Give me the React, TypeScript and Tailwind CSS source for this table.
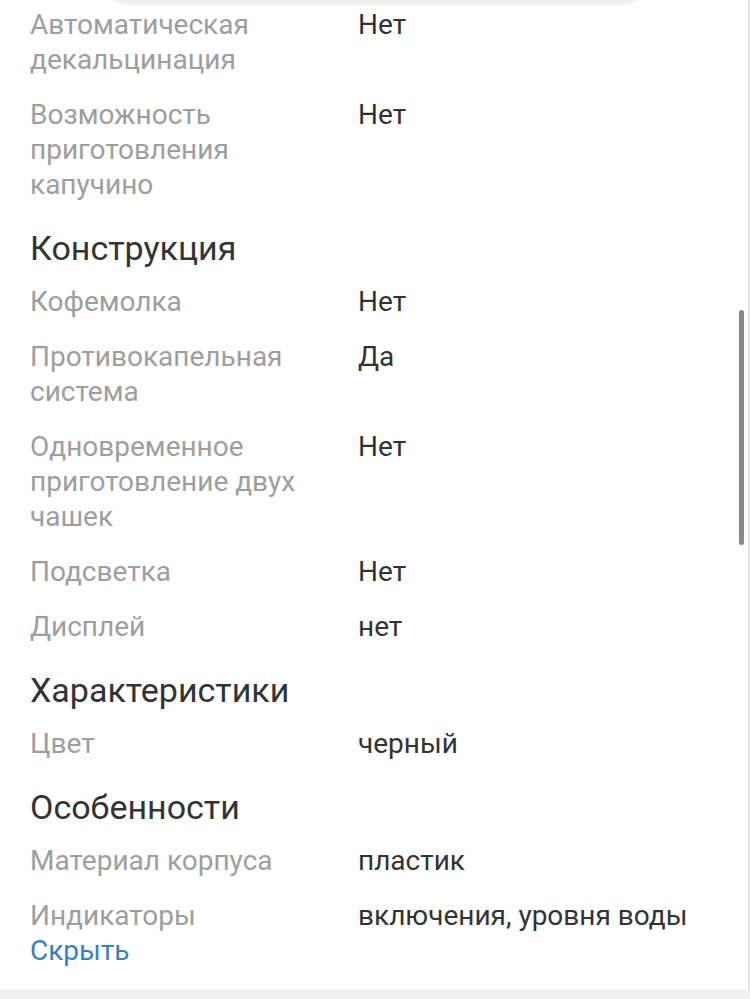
import React from "react";

type Row = { label: string; value: string };
type Section = { title?: string; rows: Row[] };

const sections: Section[] = [
  {
    rows: [
      { label: "Автоматическая декальцинация", value: "Нет" },
      { label: "Возможность приготовления капучино", value: "Нет" },
    ],
  },
  {
    title: "Конструкция",
    rows: [
      { label: "Кофемолка", value: "Нет" },
      { label: "Противокапельная система", value: "Да" },
      { label: "Одновременное приготовление двух чашек", value: "Нет" },
      { label: "Подсветка", value: "Нет" },
      { label: "Дисплей", value: "нет" },
    ],
  },
  {
    title: "Характеристики",
    rows: [{ label: "Цвет", value: "черный" }],
  },
  {
    title: "Особенности",
    rows: [
      { label: "Материал корпуса", value: "пластик" },
      { label: "Индикаторы", value: "включения, уровня воды" },
    ],
  },
];

export default function App() {
  return (
    <div
      className="relative w-[750px] h-[999px] overflow-hidden bg-[#f0f0f0]"
      style={{ fontFamily: "Roboto, 'Noto Sans', sans-serif" }}
    >
      <div className="w-[749px] h-[990px] bg-white border-r border-[#dcdcdc] overflow-hidden">
        <div className="ml-[107px] mr-[104px] h-[40px] mt-[-35px] rounded-[20px] bg-[#f0f0f0]" />
        <div className="pl-[30px] pt-[2px]">
          {sections.map((s, si) => (
            <div key={si}>
              {s.title && (
                <div className="mt-[26px] mb-[16px] text-[34px] leading-[40px] text-[#333333]">
                  {s.title}
                </div>
              )}
              <div className="flex flex-col gap-[20px]">
                {s.rows.map((r, ri) => (
                  <div key={ri} className="grid grid-cols-[328px_1fr] text-[28px] leading-[35px]">
                    <div className="pr-[20px] text-[#9e9e9e]">{r.label}</div>
                    <div className="text-[#333333]">{r.value}</div>
                  </div>
                ))}
              </div>
            </div>
          ))}
          <div className="text-[28px] leading-[35px] text-[#3a80c0]">Скрыть</div>
        </div>
      </div>
      <div className="absolute left-[739px] top-[310px] w-[5px] h-[235px] rounded-full bg-[#888888]" />
    </div>
  );
}
